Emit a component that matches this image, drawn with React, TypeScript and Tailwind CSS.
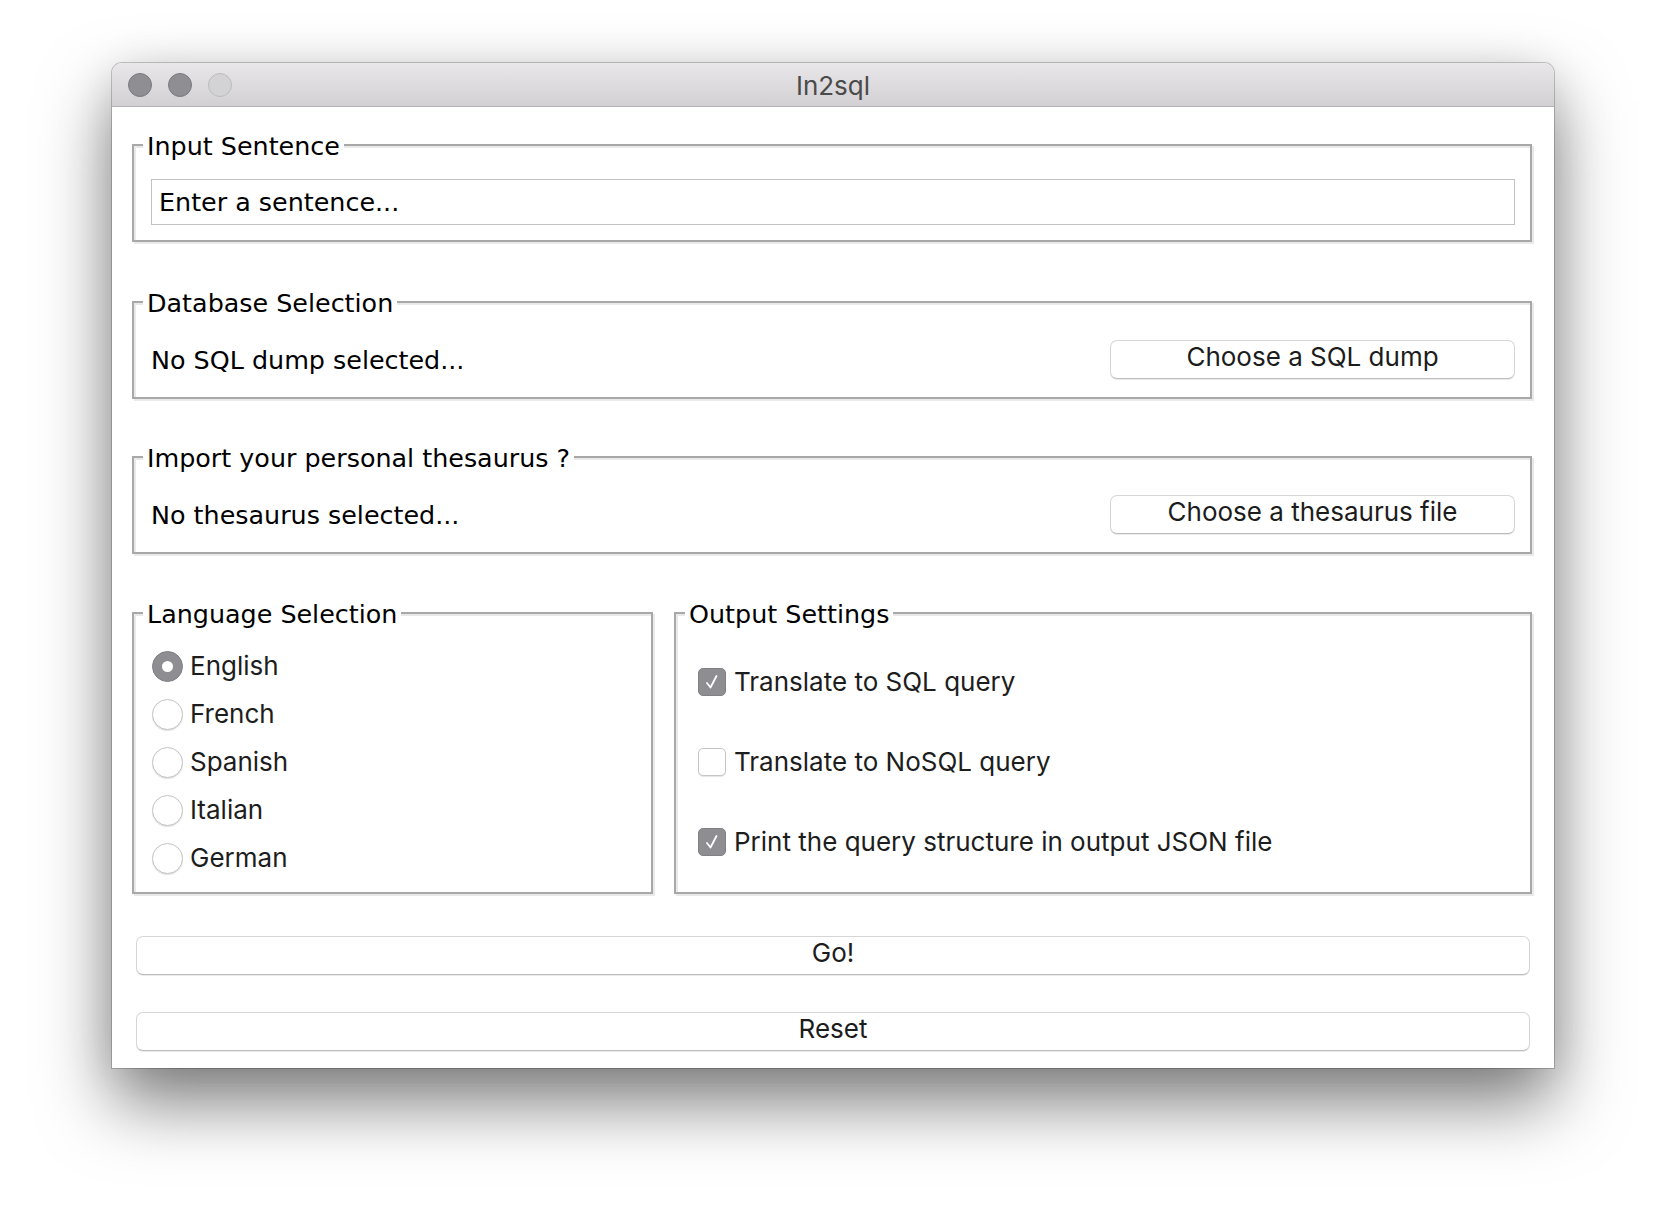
import React from "react";

const groupBox =
  "border-2 border-[#a8a8a8] bg-white shadow-[2px_2px_0_#e9e9e9,inset_2px_2px_0_#e9e9e9]";

// group titles and plain labels use the wider system font
const wide = "font-['DejaVu_Sans','Liberation_Sans',sans-serif] text-[25.4px] leading-[30px] text-black";

const GroupLabel = ({ children }: { children: React.ReactNode }) => (
  <div className={`-mt-[15px] ml-[9px] w-fit bg-white px-[4px] ${wide}`}>{children}</div>
);

const MacButton = ({ label, className = "" }: { label: string; className?: string }) => (
  <button
    className={`flex items-center justify-center rounded-[7px] border border-[#d6d6d6] border-b-[#bcbcbc] bg-white pb-[5px] text-[26px] leading-[30px] text-[#1c1c1c] shadow-[0_1px_0_rgba(0,0,0,0.08)] ${className}`}
  >
    {label}
  </button>
);

const Radio = ({ checked, label }: { checked?: boolean; label: string }) => (
  <div className="flex h-[48px] items-center gap-[7px]">
    {checked ? (
      <span className="flex h-[31px] w-[31px] items-center justify-center rounded-full border border-[#7f7e83] bg-[#8e8d92]">
        <span className="h-[11px] w-[11px] rounded-full bg-white" />
      </span>
    ) : (
      <span className="h-[31px] w-[31px] rounded-full border border-[#c4c4c4] bg-white shadow-[0_1px_1px_rgba(0,0,0,0.12)]" />
    )}
    <span className="text-[26px] leading-[30px] text-[#1d1d1d]">{label}</span>
  </div>
);

const Check = ({ checked, label }: { checked?: boolean; label: string }) => (
  <div className="flex h-[80px] items-center gap-[8px]">
    {checked ? (
      <span className="flex h-[28px] w-[28px] items-center justify-center rounded-[5px] border border-[#818085] bg-[#8e8d92]">
        <svg width="20" height="20" viewBox="0 0 20 20">
          <path d="M5 11 L8.5 15.5 L14.5 4" fill="none" stroke="white" strokeWidth="1.8" strokeLinecap="round" strokeLinejoin="round" />
        </svg>
      </span>
    ) : (
      <span className="h-[28px] w-[28px] rounded-[5px] border border-[#c6c6c6] bg-white shadow-[0_1px_1px_rgba(0,0,0,0.1)]" />
    )}
    <span className="text-[26px] leading-[30px] text-[#1d1d1d]">{label}</span>
  </div>
);

export default function App() {
  return (
    <div className="h-[1228px] w-[1666px] overflow-hidden bg-white pl-[112px] pt-[63px] font-['Inter','Liberation_Sans',sans-serif]">
      {/* window */}
      <div className="flex h-[1005px] w-[1442px] flex-col rounded-t-[10px] bg-white shadow-[0_0_0_1px_rgba(0,0,0,0.2),0_34px_70px_rgba(0,0,0,0.52),0_0_40px_rgba(0,0,0,0.07)]">
        {/* title bar */}
        <div className="grid h-[44px] shrink-0 grid-cols-[1fr_auto_1fr] items-center rounded-t-[10px] border-b border-[#b2b2b2] bg-gradient-to-b from-[#e9e7e9] to-[#d2d0d2]">
          <div className="flex items-center gap-[16px] pl-[16px]">
            <span className="h-[24px] w-[24px] rounded-full border border-[#7b7a7f] bg-[#8f8e93]" />
            <span className="h-[24px] w-[24px] rounded-full border border-[#7b7a7f] bg-[#8f8e93]" />
            <span className="h-[24px] w-[24px] rounded-full border border-[#bcbbbe] bg-[#d3d2d5]" />
          </div>
          <div className="pt-[2px] text-[26px] leading-[30px] text-[#4a4a4a]">In2sql</div>
          <div />
        </div>

        {/* content */}
        <div className="flex flex-1 flex-col pl-[20px] pr-[22px] pt-[37px]">
          <div className={groupBox}>
            <GroupLabel>Input Sentence</GroupLabel>
            <div className="pb-[15px] pl-[17px] pr-[15px] pt-[18px]">
              <div className={`flex h-[46px] items-center border border-[#c2c2c2] pl-[7px] ${wide}`}>
                Enter a sentence...
              </div>
            </div>
          </div>

          <div className={`${groupBox} mt-[59px]`}>
            <GroupLabel>Database Selection</GroupLabel>
            <div className="flex items-center justify-between pb-[18px] pl-[17px] pr-[15px] pt-[22px]">
              <span className={wide}>No SQL dump selected...</span>
              <MacButton label="Choose a SQL dump" className="h-[39px] w-[405px]" />
            </div>
          </div>

          <div className={`${groupBox} mt-[57px]`}>
            <GroupLabel>Import your personal thesaurus ?</GroupLabel>
            <div className="flex items-center justify-between pb-[18px] pl-[17px] pr-[15px] pt-[22px]">
              <span className={wide}>No thesaurus selected...</span>
              <MacButton label="Choose a thesaurus file" className="h-[39px] w-[405px]" />
            </div>
          </div>

          <div className="mt-[58px] flex gap-[21px]">
            <div className={`${groupBox} w-[521px]`}>
              <GroupLabel>Language Selection</GroupLabel>
              <div className="pb-[10px] pl-[18px] pt-[13px]">
                <Radio checked label="English" />
                <Radio label="French" />
                <Radio label="Spanish" />
                <Radio label="Italian" />
                <Radio label="German" />
              </div>
            </div>
            <div className={`${groupBox} flex-1`}>
              <GroupLabel>Output Settings</GroupLabel>
              <div className="pb-[10px] pl-[22px] pt-[13px]">
                <Check checked label="Translate to SQL query" />
                <Check label="Translate to NoSQL query" />
                <Check checked label="Print the query structure in output JSON file" />
              </div>
            </div>
          </div>

          <MacButton label="Go!" className="ml-[4px] mr-[2px] mt-[42px] h-[39px]" />
          <MacButton label="Reset" className="ml-[4px] mr-[2px] mt-[37px] h-[39px]" />
        </div>
      </div>
    </div>
  );
}
